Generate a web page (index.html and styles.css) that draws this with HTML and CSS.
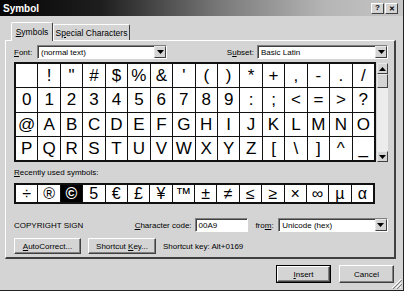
FILE: index.html
```html
<!DOCTYPE html>
<html lang="en">
<head>
  <meta charset="UTF-8">
  <title>Symbol</title>
  <link rel="stylesheet" href="styles.css">
</head>
<body>
  <div class="dialog">
    <div class="titlebar">
      <span class="title">Symbol</span>
      <div class="tb-btns">
        <span class="tb-btn">?</span>
        <span class="tb-btn close">&#x2715;</span>
      </div>
    </div>

    <div class="tabs">
      <div class="tab active"><span><u>S</u>ymbols</span></div>
      <div class="tab"><span>S<u>p</u>ecial Characters</span></div>
    </div>

    <div class="panel">
      <div class="row font-row">
        <span class="lbl font-lbl"><u>F</u>ont:</span>
        <div class="combo font-combo">
          <span class="combo-text">(normal text)</span>
          <span class="combo-btn"><svg width="7" height="4" viewBox="0 0 7 4"><polygon points="0,0 7,0 3.5,4" fill="#000"/></svg></span>
        </div>
        <span class="lbl subset-lbl">S<u>u</u>bset:</span>
        <div class="combo subset-combo">
          <span class="combo-text">Basic Latin</span>
          <span class="combo-btn"><svg width="7" height="4" viewBox="0 0 7 4"><polygon points="0,0 7,0 3.5,4" fill="#000"/></svg></span>
        </div>
      </div>

      <div class="grid-wrap">
        <div class="charmap" id="charmap"></div>
        <div class="scrollbar">
          <span class="sb-btn"><svg width="7" height="4" viewBox="0 0 7 4"><polygon points="0,4 7,4 3.5,0" fill="#000"/></svg></span>
          <span class="sb-thumb"></span>
          <span class="sb-track"></span>
          <span class="sb-btn"><svg width="7" height="4" viewBox="0 0 7 4"><polygon points="0,0 7,0 3.5,4" fill="#000"/></svg></span>
        </div>
      </div>

      <div class="lbl recent-lbl"><u>R</u>ecently used symbols:</div>
      <div class="recent" id="recent"></div>

      <div class="row code-row">
        <span class="char-name">COPYRIGHT SIGN</span>
        <span class="lbl"><u>C</u>haracter code:</span>
        <div class="field code-field">00A9</div>
        <span class="lbl from-lbl">fro<u>m</u>:</span>
        <div class="combo from-combo">
          <span class="combo-text">Unicode (hex)</span>
          <span class="combo-btn"><svg width="7" height="4" viewBox="0 0 7 4"><polygon points="0,0 7,0 3.5,4" fill="#000"/></svg></span>
        </div>
      </div>

      <div class="row btn-row">
        <span class="btn auto-btn"><span><u>A</u>utoCorrect...</span></span>
        <span class="btn key-btn"><span>Shortcut <u>K</u>ey...</span></span>
        <span class="shortcut">Shortcut key: Alt+0169</span>
      </div>
    </div>

    <div class="footer">
      <span class="btn default"><span><span><u>I</u>nsert</span></span></span>
      <span class="btn"><span>Cancel</span></span>
    </div>

    <svg class="grip" width="11" height="11" viewBox="0 0 11 11">
      <path d="M10 1 L1 10 M10 5 L5 10 M10 9 L9 10" stroke="#fff" stroke-width="1"/>
      <path d="M11 2 L2 11 M11 6 L6 11" stroke="#808080" stroke-width="1"/>
    </svg>
  </div>

  <script>
    const chars = [' ', '!', '"', '#', '$', '%', '&', "'", '(', ')', '*', '+', ',', '-', '.', '/',
      '0', '1', '2', '3', '4', '5', '6', '7', '8', '9', ':', ';', '<', '=', '>', '?',
      '@', 'A', 'B', 'C', 'D', 'E', 'F', 'G', 'H', 'I', 'J', 'K', 'L', 'M', 'N', 'O',
      'P', 'Q', 'R', 'S', 'T', 'U', 'V', 'W', 'X', 'Y', 'Z', '[', '\\', ']', '^', '_'];
    const recent = ['÷', '®', '©', '5', '€', '£', '¥', '™', '±', '≠', '≤', '≥', '×', '∞', 'µ', 'α'];

    const charmap = document.getElementById('charmap');
    chars.forEach(c => {
      const cell = document.createElement('span');
      cell.className = 'cell';
      cell.textContent = c;
      charmap.appendChild(cell);
    });

    const recentRow = document.getElementById('recent');
    recent.forEach(c => {
      const cell = document.createElement('span');
      cell.className = 'cell';
      if (c === '©') cell.classList.add('selected');
      cell.textContent = c;
      recentRow.appendChild(cell);
    });
  </script>
</body>
</html>
```

FILE: styles.css
```css
* {
  margin: 0;
  padding: 0;
  box-sizing: border-box;
}

body {
  width: 404px;
  height: 291px;
  overflow: hidden;
  background: #d4d4d4;
  font-family: 'Liberation Sans', Arial, sans-serif;
  font-size: 8px;
  color: #000;
}

u {
  text-decoration: underline;
}

.dialog {
  position: relative;
  width: 404px;
  height: 291px;
  border-bottom: 1px solid #222;
  border-right: 1px solid #222;
}

/* title bar */
.titlebar {
  display: flex;
  align-items: center;
  justify-content: space-between;
  height: 16px;
  padding: 0 5px 0 3px;
  background: linear-gradient(to right, #050505 0%, #1e1e1e 25%, #7a7a7a 55%, #b4b4b4 80%, #c6c6c6 100%);
}

.title {
  color: #fff;
  font-weight: bold;
  font-size: 10px;
}

.tb-btns {
  display: flex;
}

.tb-btn {
  display: flex;
  align-items: center;
  justify-content: center;
  width: 13px;
  height: 11px;
  background: #d4d4d4;
  border: 1px solid;
  border-color: #fff #404040 #404040 #fff;
  font-size: 8px;
  font-weight: bold;
  line-height: 1;
}

.tb-btn.close {
  margin-left: 1px;
  font-size: 7px;
}

/* tabs */
.tabs {
  display: flex;
  align-items: flex-end;
  height: 24px;
  padding-left: 11px;
}

.tab {
  height: 16px;
  display: flex;
  align-items: center;
  justify-content: center;
  border: 1px solid;
  border-bottom: none;
  border-color: #fff #404040 #404040 #fff;
  border-radius: 2px 2px 0 0;
  white-space: nowrap;
  font-size: 8.5px;
}

.tab.active {
  position: relative;
  z-index: 1;
  height: 19px;
  width: 42px;
  margin-bottom: -1px;
  background: #d4d4d4;
}

.tab:not(.active) {
  width: 77px;
}

/* panel */
.panel {
  width: 391px;
  height: 219px;
  margin-left: 5px;
  padding: 4px 6px 0 8px;
  border: 1px solid;
  border-color: #fff #404040 #404040 #fff;
  border-width: 1px 2px 2px 1px;
}

.row {
  display: flex;
  align-items: center;
}

.lbl {
  white-space: nowrap;
}

.font-row {
  height: 14px;
}

.font-lbl {
  width: 23px;
}

.subset-lbl {
  margin-left: auto;
  margin-right: 3px;
}

/* combo and fields */
.combo,
.field {
  display: flex;
  align-items: center;
  height: 14px;
  background: #fff;
  border: 1px solid;
  border-color: #808080 #fff #fff #808080;
  box-shadow: inset 1px 1px #404040;
}

.combo-text {
  flex: 1;
  padding-left: 3px;
  white-space: nowrap;
}

.combo-btn {
  display: flex;
  align-items: center;
  justify-content: center;
  width: 12px;
  height: 12px;
  background: #d4d4d4;
  border: 1px solid;
  border-color: #e8e8e8 #404040 #404040 #e8e8e8;
}

.font-combo {
  width: 130px;
}

.subset-combo {
  width: 131px;
}

.field {
  padding-left: 3px;
}

/* character grid */
.grid-wrap {
  display: flex;
  margin-top: 3px;
  height: 100px;
}

.charmap,
.recent {
  display: grid;
  grid-template-columns: repeat(16, 1fr);
  gap: 1px;
  background: #111;
  border: 2px solid #111;
}

.charmap {
  width: 362px;
  grid-template-rows: repeat(4, 1fr);
}

.cell {
  display: flex;
  align-items: center;
  justify-content: center;
  background: #fff;
  font-size: 17px;
  line-height: 1;
}

.cell.selected {
  background: #000;
  color: #fff;
  font-weight: bold;
}

.scrollbar {
  display: flex;
  flex-direction: column;
  width: 11px;
  margin-left: 1px;
  margin-top: 1px;
  background: #ececec;
}

.sb-btn,
.sb-thumb {
  display: flex;
  align-items: center;
  justify-content: center;
  height: 11px;
  background: #d4d4d4;
  border: 1px solid;
  border-color: #e8e8e8 #404040 #404040 #e8e8e8;
}

.sb-thumb {
  height: 14px;
}

.sb-track {
  flex: 1;
}

.recent-lbl {
  margin-top: 5px;
  height: 12px;
  line-height: 12px;
}

.recent {
  margin-top: 4px;
  width: 361px;
  height: 21px;
}

.recent .cell {
  font-size: 16px;
}

/* code row */
.code-row {
  margin-top: 14px;
  height: 14px;
}

.char-name {
  width: 121px;
}

.code-field {
  width: 54px;
  margin-left: 3px;
}

.from-lbl {
  margin-left: 7px;
  width: 23px;
}

.from-combo {
  width: 110px;
}

/* buttons */
.btn {
  display: flex;
  align-items: center;
  justify-content: center;
  background: #d4d4d4;
  border: 1px solid;
  border-color: #fff #404040 #404040 #fff;
  box-shadow: inset -1px -1px #808080;
  white-space: nowrap;
}

.btn-row {
  margin-top: 6px;
  height: 16px;
}

.auto-btn {
  width: 67px;
  height: 16px;
}

.key-btn {
  width: 68px;
  height: 16px;
  margin-left: 7px;
}

.shortcut {
  margin-left: 7px;
}

.footer {
  display: flex;
  justify-content: flex-end;
  gap: 8px;
  margin-top: 6px;
  padding-right: 9px;
}

.footer .btn {
  width: 55px;
  height: 18px;
}

.footer .btn.default {
  border: 1px solid #000;
  box-shadow: none;
}

.footer .btn.default > span {
  display: flex;
  align-items: center;
  justify-content: center;
  width: 100%;
  height: 100%;
  border: 1px solid;
  border-color: #fff #404040 #404040 #fff;
  box-shadow: inset -1px -1px #808080;
}

.grip {
  position: absolute;
  right: 1px;
  bottom: 1px;
}
```
